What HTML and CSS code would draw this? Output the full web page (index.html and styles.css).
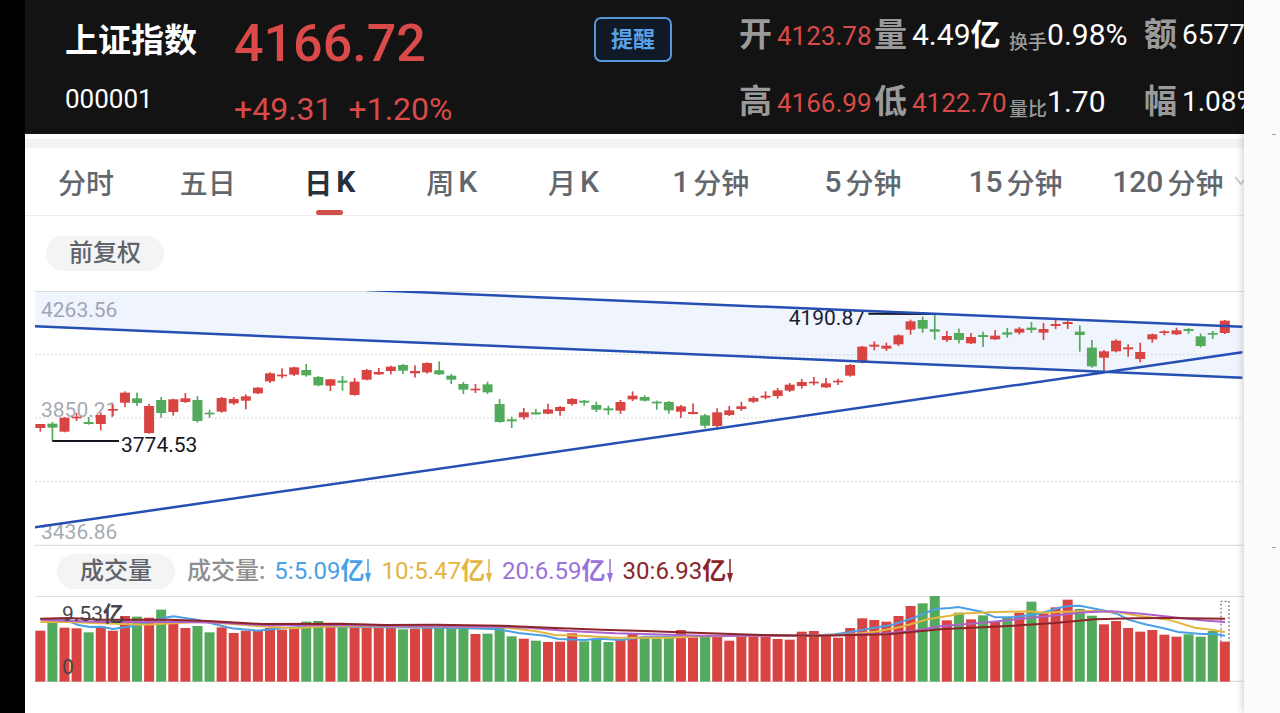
FILE: index.html
```html
<!DOCTYPE html>
<html lang="zh-CN">
<head>
  <meta charset="UTF-8">
  <meta name="viewport" content="width=device-width, initial-scale=1.0">
  <title>上证指数 000001</title>
  <link rel="stylesheet" href="styles.css">
</head>
<body>

  <main class="page">

    <!-- 行情头部 -->
    <header class="quote">
      <div class="quote-name">
        <h1>上证指数</h1>
        <p>000001</p>
      </div>
      <div class="quote-price">
        <p class="price">4166.72</p>
        <p class="change"><span>+49.31</span><span>+1.20%</span></p>
      </div>
      <div class="quote-action">
        <button class="remind" type="button">提醒</button>
      </div>
      <dl class="stats">
        <div><dt>开</dt><dd class="up">4123.78</dd></div>
        <div><dt>量</dt><dd>4.49<b>亿</b></dd></div>
        <div class="small"><dt>换手</dt><dd>0.98%</dd></div>
        <div class="last"><dt>额</dt><dd>6577</dd></div>
        <div><dt>高</dt><dd class="up">4166.99</dd></div>
        <div><dt>低</dt><dd class="up">4122.70</dd></div>
        <div class="small"><dt>量比</dt><dd>1.70</dd></div>
        <div class="last"><dt>幅</dt><dd>1.08%</dd></div>
      </dl>
    </header>

    <!-- 周期切换 -->
    <nav class="tabs">
      <button type="button">分时</button>
      <button type="button">五日</button>
      <button type="button" class="active">日<span>K</span></button>
      <button type="button">周<span>K</span></button>
      <button type="button">月<span>K</span></button>
      <button type="button"><span>1</span>分钟</button>
      <button type="button"><span>5</span>分钟</button>
      <button type="button"><span>15</span>分钟</button>
      <button type="button"><span>120</span>分钟</button>
      <svg class="chevron" viewBox="0 0 14 10" aria-hidden="true"><path d="M1 1l6 7 6-7"/></svg>
    </nav>

    <div class="toolbar">
      <button class="pill" type="button">前复权</button>
    </div>

    <!-- K线图 -->
    <section class="chart kline">
      <span class="axis axis-top">4263.56</span>
      <span class="axis axis-mid">3850.21</span>
      <span class="axis axis-bottom">3436.86</span>
      <span class="mark mark-low">3774.53</span>
      <span class="mark mark-high">4190.87</span>
      <svg id="kline" viewBox="0 18 3624 765" preserveAspectRatio="none">
        <polygon class="channel" points="0,18 995,18 3622,125 3622,278 0,124"/>
        <path class="grid" d="M0 209H3624M0 399H3624M0 590H3624"/>
        <path class="frame" d="M0 19H3624M0 781H3624"/>
        <g id="candles"></g>
        <path class="leader" d="M52 468H252M2500 86L2700 87"/>
        <path class="trend" d="M995 15L3622 125M0 124L3622 278M0 727L3622 202"/>
      </svg>
    </section>

    <div class="indicator">
      <button class="pill" type="button">成交量</button>
      <p class="legend">
        <span class="legend-title">成交量:</span>
        <span class="ma5">5:5.09<b>亿</b><svg viewBox="0 0 8 24"><path d="M4 0V20"/><path class="head" d="M1 14h6L4 24z"/></svg></span>
        <span class="ma10">10:5.47<b>亿</b><svg viewBox="0 0 8 24"><path d="M4 0V20"/><path class="head" d="M1 14h6L4 24z"/></svg></span>
        <span class="ma20">20:6.59<b>亿</b><svg viewBox="0 0 8 24"><path d="M4 0V20"/><path class="head" d="M1 14h6L4 24z"/></svg></span>
        <span class="ma30">30:6.93<b>亿</b><svg viewBox="0 0 8 24"><path d="M4 0V20"/><path class="head" d="M1 14h6L4 24z"/></svg></span>
      </p>
    </div>

    <!-- 成交量 -->
    <section class="chart volume">
      <svg id="volume" viewBox="0 151 3624 258" preserveAspectRatio="none">
        <path class="frame" d="M0 152H3624M0 407H3624"/>
        <g id="bars"></g>
        <path class="estimate" d="M3558 288V167H3582V288"/>
        <polyline class="ma5" points="16,220 88,222 130,238 165,244 200,243 234,250 290,242 330,233 370,220 415,212 490,223 550,238 590,248 665,255 740,248 850,240 915,243 1200,246 1300,248 1390,251 1450,262 1530,270 1570,280 1650,283 1690,279 1760,283 1829,273 1900,273 2000,272 2180,270 2270,271 2350,269 2400,266 2440,260 2510,248 2570,238 2640,215 2700,190 2745,187 2770,184 2840,198 2880,215 2940,214 3010,205 3070,187 3100,181 3135,180 3210,195 3250,206 3280,222 3330,236 3380,246 3430,259 3500,265 3540,265 3570,270"/>
        <polyline class="ma10" points="16,229 100,229 200,233 330,237 500,228 600,236 770,248 850,243 915,242 1200,243 1390,244 1450,250 1500,256 1560,268 1640,270 1740,276 1829,276 1900,276 2000,272 2200,270 2350,270 2450,266 2520,258 2600,243 2680,220 2745,210 2770,204 2860,200 2980,197 3030,201 3090,198 3180,196 3250,200 3310,210 3400,222 3480,246 3530,252 3570,259"/>
        <polyline class="ma20" points="16,222 200,229 400,228 560,231 700,239 900,238 1100,242 1390,243 1480,246 1600,256 1740,263 1829,265 2000,270 2200,270 2400,269 2560,263 2640,255 2715,242 2860,230 2930,222 3050,210 3150,200 3230,197 3320,204 3430,216 3500,224 3570,229"/>
        <polyline class="ma30" points="16,219 100,217 200,222 400,222 520,226 680,235 915,234 1050,238 1200,237 1400,240 1560,247 1700,252 1829,256 2000,262 2180,268 2350,270 2560,266 2715,251 2920,241 3060,232 3180,221 3300,218 3400,217 3570,219"/>
      </svg>
      <span class="mark vol-max">9.53<b>亿</b></span>
      <span class="mark vol-min">0</span>
    </section>

  </main>

  <aside class="rail"><i></i><i></i></aside>

  <script src="chart.js"></script>
</body>
</html>
```

FILE: styles.css
```css
* {
  box-sizing: border-box;
  margin: 0;
  padding: 0;
}

body {
  display: flex;
  min-height: 100vh;
  padding-left: 25px;
  background: #000;
  font-family: Roboto, "Noto Sans CJK SC", sans-serif;
  overflow-x: hidden;
}

button {
  border: none;
  background: none;
  font-family: inherit;
  cursor: pointer;
}

.page {
  flex: 1;
  min-width: 0;
  background: #fff;
  overflow: hidden;
}

/* 行情头部 */
.quote {
  display: grid;
  grid-template-columns: 169px 360px 145px 1fr;
  height: 134px;
  padding-left: 40px;
  background: #131313;
  color: #fff;
  overflow: hidden;
}

.quote-name h1 {
  font-size: 33px;
  font-weight: bold;
  line-height: 82px;
}

.quote-name p {
  font-size: 26px;
  line-height: 34px;
}

.quote-price {
  color: #d94a48;
}

.price {
  font-size: 52px;
  font-weight: 500;
  line-height: 88px;
}

.change {
  display: flex;
  gap: 16px;
  font-size: 32px;
  line-height: 42px;
}

.quote-action {
  padding-top: 17px;
}

.remind {
  width: 78px;
  height: 45px;
  border: 2px solid #5596dc;
  border-radius: 7px;
  background: #0f1a26;
  color: #5aa0e8;
  font-size: 22px;
  font-weight: bold;
  line-height: 38px;
}

.stats {
  display: grid;
  grid-template-columns: repeat(4, 135px);
  grid-template-rows: 67px 67px;
  min-width: 0;
  padding-top: 1px;
}

.stats div {
  display: flex;
  gap: 5px;
  white-space: nowrap;
  line-height: 67px;
}

.stats dt {
  color: #9a9a9a;
  font-size: 33px;
  font-weight: bold;
}

.stats dd {
  font-size: 30px;
}

.stats .up {
  color: #d94a48;
  font-size: 26px;
  padding-top: 2px;
}

.stats .small {
  gap: 0;
}

.stats .small dt {
  font-size: 19px;
  font-weight: 500;
  padding-top: 8px;
}

.stats .last dd {
  font-size: 28px;
}

/* 周期切换 */
.tabs {
  position: relative;
  display: grid;
  grid-template-columns: repeat(5, 4fr) repeat(4, 5fr);
  height: 77px;
  margin-top: 5px;
  border-top: 9px solid #f3f3f3;
  border-bottom: 1px solid #ececec;
}

.tabs button {
  position: relative;
  display: flex;
  justify-content: center;
  align-items: center;
  gap: 4px;
  color: #62666d;
  font-size: 28px;
  font-weight: 500;
}

.tabs span {
  font-size: 30px;
}

.tabs .active {
  color: #27303b;
  font-weight: bold;
}

.tabs .active::after {
  content: "";
  position: absolute;
  bottom: 0;
  width: 27px;
  height: 5px;
  border-radius: 3px;
  background: #cf4f4b;
}

.chevron {
  position: absolute;
  right: -4px;
  top: 28px;
  width: 14px;
  height: 10px;
  fill: none;
  stroke: #cfd1d4;
  stroke-width: 2;
}

.toolbar {
  padding: 20px 21px;
}

.pill {
  display: block;
  width: 118px;
  height: 35px;
  border-radius: 18px;
  background: #f4f4f4;
  color: #5f646c;
  font-size: 24px;
  font-weight: 500;
  line-height: 35px;
}

/* 图表 */
.chart {
  position: relative;
  margin: 0 1px 0 10px;
}

.chart svg {
  position: relative;
  display: block;
  width: 100%;
}

.kline svg {
  height: 255px;
}

.volume svg {
  height: 86px;
}

.chart path,
.chart polyline {
  fill: none;
  vector-effect: non-scaling-stroke;
}

.channel {
  fill: #3c78e6;
  fill-opacity: 0.08;
}

.chart .frame {
  stroke: #d9d9d9;
  stroke-width: 1;
}

.chart .grid {
  stroke: #d6d6d6;
  stroke-width: 1;
  stroke-dasharray: 2 2;
}

.chart .trend {
  stroke: #254fb3;
  stroke-width: 2.5;
}

.chart .leader {
  stroke: #15151f;
  stroke-width: 2;
}

.rise {
  fill: #d84442;
}

.fall {
  fill: #53a95c;
}

.axis,
.mark {
  position: absolute;
  font-size: 21px;
  line-height: 24px;
}

.axis {
  left: 6px;
  color: #a7abb3;
}

.mark {
  color: #15151f;
}

.axis-top {
  top: 7px;
}

.axis-mid {
  top: 107px;
}

.axis-bottom {
  bottom: 2px;
}

.mark-low {
  left: 86px;
  top: 142px;
}

.mark-high {
  right: 378px;
  top: 15px;
}

.volume .mark {
  left: 27px;
  color: #46464a;
}

.vol-max {
  top: 6px;
}

.vol-min {
  bottom: 3px;
}

/* 指标栏 */
.indicator {
  display: flex;
  align-items: center;
  gap: 12px;
  height: 50px;
  padding-left: 32px;
}

.legend {
  display: flex;
  gap: 9px;
  font-size: 24px;
  line-height: 34px;
  white-space: nowrap;
}

.legend span {
  display: flex;
  align-items: center;
}

.legend-title {
  color: #8f8f8f;
  font-weight: 500;
}

.legend svg {
  width: 8px;
  height: 24px;
  fill: none;
  stroke: currentColor;
  stroke-width: 1.5;
}

.legend .head {
  fill: currentColor;
  stroke: none;
}

.ma5 {
  color: #4a9fe6;
}

.ma10 {
  color: #e3b541;
}

.ma20 {
  color: #9a72dc;
}

.ma30 {
  color: #8c2529;
}

.chart polyline {
  stroke: currentColor;
  stroke-width: 2;
}

.chart .ma20 {
  color: #ad62cb;
}

.chart .estimate {
  stroke: #55555f;
  stroke-width: 1;
  stroke-dasharray: 2 2;
}

/* 右侧栏 */
.rail {
  position: relative;
  display: flex;
  flex-direction: column;
  align-items: flex-end;
  width: 36px;
  padding: 134px 4px 0 0;
  gap: 412px;
  background: #fbfbfb;
  box-shadow: 0 0 8px rgba(0, 0, 0, 0.25);
}

.rail i {
  width: 4px;
  height: 1px;
  background: #a5a5a5;
}
```

FILE: chart.js
```js
// 每根K线: 颜色, 最高, 实体上沿, 实体下沿, 最低, 成交量上沿
const data = [
  ["r",417,417,429,440,255], ["g",411,416,428,468,227], ["r",396,398,440,442,246], ["r",384,395,400,408,248],
  ["g",396,411,417,419,260], ["r",383,390,417,436,243], ["r",358,372,377,394,255], ["r",319,323,353,366,211],
  ["g",323,340,354,363,213], ["r",357,363,444,446,216], ["g",336,345,384,398,192], ["r",341,343,381,392,232],
  ["r",324,340,351,354,247], ["g",333,345,408,413,241], ["g",374,383,388,398,260], ["r",336,339,380,383,245],
  ["r",336,342,355,360,262], ["r",328,334,347,373,255], ["r",306,308,325,327,254], ["r",262,265,289,294,247],
  ["r",250,269,274,280,252], ["r",245,247,269,273,245], ["g",237,255,271,275,228], ["g",273,276,301,304,226],
  ["r",282,283,302,318,240], ["g",273,287,293,317,243], ["r",279,290,330,332,242], ["r",252,255,284,286,240],
  ["r",249,261,268,270,247], ["r",242,245,258,268,242], ["g",237,240,257,267,251], ["r",241,258,265,278,249],
  ["r",232,234,262,266,246], ["g",229,256,268,270,243], ["g",267,272,284,297,244], ["g",291,297,314,327,244],
  ["r",297,311,316,324,265], ["g",290,298,322,327,264], ["g",342,357,411,413,238], ["g",395,403,409,429,272],
  ["r",369,382,397,404,279], ["g",372,382,388,389,285], ["r",356,373,386,388,289], ["r",363,366,378,392,288],
  ["r",339,342,357,362,263], ["g",345,347,353,362,287], ["g",350,360,374,381,279], ["g",362,370,376,389,289],
  ["r",345,351,377,387,281], ["r",319,332,343,348,264], ["g",331,336,347,350,277], ["g",347,350,355,374,278],
  ["g",348,351,376,386,275], ["r",360,364,380,399,253], ["r",355,381,387,388,275], ["g",387,391,422,430,274],
  ["r",370,382,423,428,274], ["r",363,376,390,393,285], ["r",350,364,372,378,272], ["r",334,339,350,354,272],
  ["r",319,332,338,343,274], ["r",309,316,333,341,280], ["r",294,299,317,321,282], ["r",282,291,303,311,258],
  ["r",276,290,295,301,256], ["r",279,295,307,309,269], ["r",281,287,292,300,276], ["r",237,240,272,275,247],
  ["r",183,185,230,235,218], ["r",169,179,185,196,223], ["r",173,182,191,198,228], ["r",148,151,178,183,211],
  ["r",104,109,134,149,181], ["g",95,105,131,143,173], ["g",87,133,140,164,151], ["r",138,153,165,171,224],
  ["g",131,144,165,175,201], ["r",144,156,175,177,221], ["g",140,150,156,186,209], ["r",135,152,163,165,229],
  ["g",129,142,149,158,214], ["r",126,131,143,149,201], ["g",111,128,135,144,168], ["r",114,132,143,165,203],
  ["r",104,117,123,132,185], ["r",106,111,117,132,162], ["g",121,140,150,200,190], ["g",165,188,244,248,210],
  ["r",195,199,218,260,236], ["r",163,167,199,202,226], ["r",178,187,193,215,247], ["r",173,201,222,232,258],
  ["r",146,148,163,173,253], ["r",136,139,144,151,267], ["r",128,136,148,150,273], ["g",129,132,138,146,266],
  ["g",146,154,183,187,273], ["g",138,144,149,162,256], ["r",105,107,144,147,288]
];

const step = 36.26;
const baseline = 408;

function rect(x, y, w, h, cls) {
  return `<rect class="${cls}" x="${x}" y="${y}" width="${w}" height="${h}"/>`;
}

let candles = "";
let bars = "";

data.forEach(([color, high, top, bottom, low, vol], i) => {
  const x = 16 + i * step;
  const cls = color === "r" ? "rise" : "fall";
  candles += rect(x - 2.5, high, 5, low - high, cls);
  candles += rect(x - 15, top, 30, bottom - top, cls);
  bars += rect(x - 15, vol, 30, baseline - vol, cls);
});

document.getElementById("candles").innerHTML = candles;
document.getElementById("bars").innerHTML = bars;
```
